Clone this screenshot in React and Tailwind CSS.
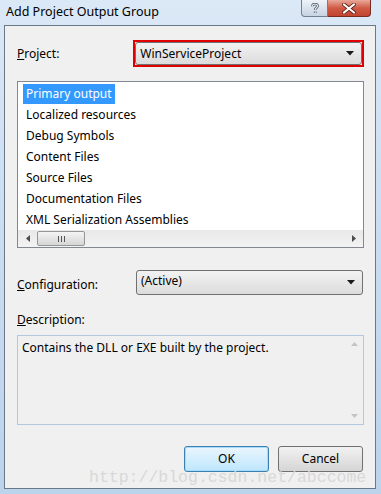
const ui = { fontFamily: '"Noto Sans", "Open Sans", sans-serif' };

function ComboArrow() {
  return (
    <svg width="8" height="5" viewBox="0 0 8 5" className="shrink-0">
      <path d="M0 0h8L4 4.5z" fill="#1a1a1a" />
    </svg>
  );
}

function Combo({ value, className = '', textClass = '' }) {
  return (
    <div className={`flex items-center justify-between rounded-[3px] border border-[#707070] bg-gradient-to-b from-[#f2f2f2] to-[#dcdcdc] pl-[4px] pr-[7px] ${className}`}>
      <span className={`text-[12px] leading-none text-black ${textClass}`}>{value}</span>
      <ComboArrow />
    </div>
  );
}

const items = [
  'Primary output',
  'Localized resources',
  'Debug Symbols',
  'Content Files',
  'Source Files',
  'Documentation Files',
  'XML Serialization Assemblies',
];

export default function App() {
  return (
    <div className="relative flex h-[494px] w-[381px] flex-col bg-gradient-to-b from-[#dbe8f6] via-[#c9dcf1] to-[#bcd3ec]" style={ui}>
      {/* title bar */}
      <div className="flex h-[25px] shrink-0 items-start justify-between">
        <div className="pl-[6px] pt-[3px] text-[12.5px] leading-[18px] text-black">Add Project Output Group</div>
        <div className="mr-[10px] flex">
          <div className="flex h-[17px] w-[27px] items-center justify-center rounded-bl-[4px] border border-t-0 border-[#707f91] bg-gradient-to-b from-[#eef3f9] to-[#c7d3e1]">
            <svg width="8" height="11" viewBox="0 0 8 11">
              <path d="M1.5 3.2C1.5 1.8 2.6 1 4 1s2.5.8 2.5 2.1c0 1.6-2.3 1.8-2.3 3.6M4.2 8.6v1.4" stroke="#3b4656" strokeWidth="2.6" fill="none" />
              <path d="M1.5 3.2C1.5 1.8 2.6 1 4 1s2.5.8 2.5 2.1c0 1.6-2.3 1.8-2.3 3.6M4.2 8.6v1.4" stroke="#eef2f6" strokeWidth="1.2" fill="none" />
            </svg>
          </div>
          <div className="flex h-[17px] w-[43px] items-center justify-center rounded-br-[4px] border border-l-0 border-t-0 border-[#7b2a20] bg-gradient-to-b from-[#e9a899] via-[#cf5a45] to-[#c24430]">
            <svg width="14" height="11" viewBox="0 0 14 11">
              <path d="M2 1.5l10 8M12 1.5l-10 8" stroke="#5a1c14" strokeWidth="3.6" strokeLinecap="square" />
              <path d="M2 1.5l10 8M12 1.5l-10 8" stroke="#ffffff" strokeWidth="2" strokeLinecap="square" />
            </svg>
          </div>
        </div>
      </div>

      {/* client area */}
      <div className="mb-[5px] ml-[4px] mr-[5px] flex flex-1 flex-col border border-[#6b7887] bg-[#f0f0f0] pl-[12px] pr-[11px] text-[12px] text-black">
        <div className="mt-[14px] flex h-[27px] items-center">
          <div className="w-[117px]">
            <u>P</u>roject:
          </div>
          <div className="flex h-[27px] w-[232px] border-2 border-[#e10000] p-0">
            <Combo value="WinServiceProject" className="h-full w-full" />
          </div>
        </div>

        {/* list box */}
        <div className="mt-[14px] flex h-[167px] flex-col border border-[#828790] bg-white">
          <div className="flex flex-1 flex-col pl-[5px] pt-[1px]">
            {items.map((it, i) => (
              <div key={it} className="flex h-[21px] items-center">
                <span className={`px-[3px] leading-[20px] ${i === 0 ? 'bg-[#3399ff] text-white' : 'text-black'}`}>{it}</span>
              </div>
            ))}
          </div>
          <div className="flex h-[17px] items-center bg-gradient-to-b from-[#e8e8e8] to-[#f3f3f3]">
            <div className="flex w-[19px] justify-center">
              <svg width="4" height="7" viewBox="0 0 4 7"><path d="M4 0v7L0 3.5z" fill="#4a4a4a" /></svg>
            </div>
            <div className="flex h-[15px] w-[48px] items-center justify-center rounded-[2px] border border-[#969696] bg-gradient-to-b from-[#f4f4f4] to-[#d6d6d6]">
              <svg width="7" height="6" viewBox="0 0 7 6"><path d="M0.5 0v6M3.5 0v6M6.5 0v6" stroke="#555" strokeWidth="1" /></svg>
            </div>
            <div className="flex-1" />
            <div className="flex w-[19px] justify-center">
              <svg width="4" height="7" viewBox="0 0 4 7"><path d="M0 0v7L4 3.5z" fill="#4a4a4a" /></svg>
            </div>
          </div>
        </div>

        <div className="mt-[22px] flex h-[25px] items-center">
          <div className="w-[119px] pt-[4px]">
            <u>C</u>onfiguration:
          </div>
          <Combo value="(Active)" className="h-[25px] w-[227px]" textClass="self-start pt-[4px]" />
        </div>

        <div className="mt-[17px] leading-[16px]">
          <u>D</u>escription:
        </div>

        <div className="mt-[7px] flex h-[90px] border border-[#b3c8e0] bg-[#f0f0f0]">
          <div className="flex-1 pl-[4px] pt-[4px] leading-[16px]">Contains the DLL or EXE built by the project.</div>
          <div className="flex w-[17px] flex-col items-center justify-between py-[6px]">
            <svg width="7" height="4" viewBox="0 0 7 4"><path d="M0 4h7L3.5 0z" fill="#c4c4c4" /></svg>
            <svg width="7" height="4" viewBox="0 0 7 4"><path d="M0 0h7L3.5 4z" fill="#c4c4c4" /></svg>
          </div>
        </div>

        <div className="mt-[21px] flex justify-end gap-[9px] pr-[1px]">
          <button className="flex h-[26px] w-[85px] items-center justify-center rounded-[3px] border border-[#3c7fb1] bg-gradient-to-b from-[#eaf6fd] to-[#bee6fd] shadow-[inset_0_0_0_1px_#a6dcf8] text-[12px]">
            OK
          </button>
          <button className="flex h-[26px] w-[85px] items-center justify-center rounded-[3px] border border-[#707070] bg-gradient-to-b from-[#f2f2f2] to-[#d5d5d5] text-[12px]">
            Cancel
          </button>
        </div>
      </div>

      {/* watermark */}
      <div className="pointer-events-none absolute left-[89px] top-[469px] text-[16.5px] leading-[18px] text-[#d8d8d8]" style={{ fontFamily: '"Liberation Mono", monospace' }}>
        http://blog.csdn.net/abccome
      </div>
    </div>
  );
}
